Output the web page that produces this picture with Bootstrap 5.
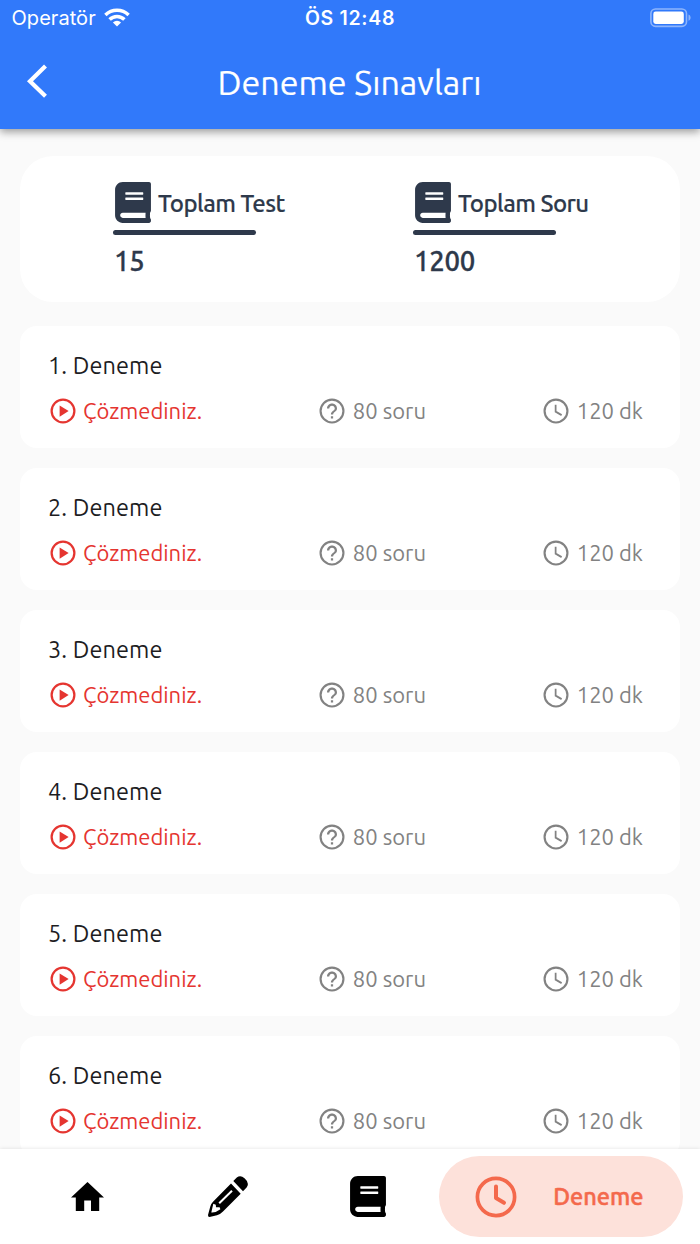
<!DOCTYPE html>
<html lang="tr">
<head>
<meta charset="utf-8">
<meta name="viewport" content="width=device-width, initial-scale=1">
<title>Deneme Sınavları</title>
<link rel="stylesheet" href="https://cdn.jsdelivr.net/npm/bootstrap@5.3.0/dist/css/bootstrap.min.css">
<style>
  body { font-family: "Ubuntu", "Noto Sans", sans-serif; background: #fafafa; color: #1d1d1f; }
  svg { display: block; flex: none; }
  .app-header { height: 128.5px; background: #3179fa; box-shadow: 0 3px 8px rgba(0,0,0,.38); z-index: 2; }
  .status-line { height: 36px; padding: 0 9px; font-family: "Inter", sans-serif; font-size: 20px; line-height: 36px; }
  .status-side { flex: 1 1 0; }
  .carrier { letter-spacing: .05px; margin-left: 2.5px; }
  .clock-text { font-weight: 600; font-size: 19.5px; letter-spacing: .7px; }
  .title-line { height: 92.5px; padding-left: 26px; }
  .title-line h1 { font-size: 34px; line-height: 91px; font-weight: 400; -webkit-text-stroke: .2px currentColor; }
  .title-end { width: 49px; }
  .app-main { padding: 27px 20px 0; min-height: 0; }
  .summary { height: 146.5px; border-radius: 33px; color: #2e394b; padding: 26px 0 0 92.5px; margin-bottom: 24px; }
  .summary-item { width: 300px; flex: none; }
  .summary-icon { margin: 0 0 0 2px; }
  .summary-label { font-size: 24px; line-height: 42px; font-weight: 500; letter-spacing: -.6px; margin: 1px 0 -1px 7.5px; -webkit-text-stroke: .15px currentColor; }
  .rule { width: 143.5px; height: 5.5px; border-radius: 3px; background: #2e394b; margin: 6px 0 0; }
  .summary-value { font-size: 27.5px; line-height: 36px; font-weight: 500; letter-spacing: -.3px; margin: 8px 0 0 1.5px; -webkit-text-stroke: .3px currentColor; }
  .exam { height: 122px; border-radius: 17px; padding: 24px 37px 0 28px; margin-bottom: 20px; flex: none; }
  .exam h2 { font-size: 23.5px; line-height: 30px; font-weight: 400; letter-spacing: .1px; margin: 0 0 15.5px; }
  .exam-info { font-size: 22px; line-height: 30px; color: #828282; margin-left: -.5px; }
  .exam-info span { margin-left: 5.5px; }
  .exam-info .unsolved { color: #e53530; }
  .bottom-bar { height: 95px; background: #fff; box-shadow: 0 0 4px rgba(0,0,0,.12); z-index: 2; padding: 7px 17px; }
  .tab { width: 140.5px; height: 81px; }
  .tab-active { width: 244px; height: 81px; color: #f4694c; background: #fde1da; font-size: 23.5px; font-weight: 500; padding: 0 39px 0 36px; }
  .tab-active span { -webkit-text-stroke: .5px currentColor; }
</style>
</head>
<body class="vh-100 overflow-hidden d-flex flex-column">

<svg class="d-none" xmlns="http://www.w3.org/2000/svg">
  <symbol id="book" viewBox="0 0 448 512"><path fill="currentColor" d="M448 360V24c0-13.3-10.7-24-24-24H96C43 0 0 43 0 96v320c0 53 43 96 96 96h328c13.3 0 24-10.7 24-24v-16c0-7.5-3.5-14.3-8.9-18.7-4.2-15.4-4.2-59.3 0-74.7 5.4-4.3 8.9-11.1 8.9-18.6zM128 134c0-3.3 2.7-6 6-6h212c3.3 0 6 2.7 6 6v20c0 3.3-2.7 6-6 6H134c-3.3 0-6-2.7-6-6v-20zm0 64c0-3.3 2.7-6 6-6h212c3.3 0 6 2.7 6 6v20c0 3.3-2.7 6-6 6H134c-3.3 0-6-2.7-6-6v-20zm253.4 250H96c-17.7 0-32-14.3-32-32 0-17.6 14.4-32 32-32h285.4c-1.9 17.1-1.9 46.9 0 64z"/></symbol>
  <symbol id="play" viewBox="0 0 24 24"><circle cx="12" cy="12" r="9.1" fill="none" stroke="currentColor" stroke-width="1.8"/><path fill="currentColor" d="M9.3 7.5v9l7.2-4.5z"/></symbol>
  <symbol id="help" viewBox="0 0 24 24"><circle cx="12" cy="12" r="9.15" fill="none" stroke="currentColor" stroke-width="1.7"/><path fill="currentColor" d="M11.1 18h1.8v-1.900h-1.800zM12 6c-2.210 0-4 1.790-4 4h1.800c0-1.300 1-2.200 2.200-2.200s2.200 1 2.200 2.100c0 2-3.100 1.850-3.100 4.900h1.800c0-2.150 3.100-2.400 3.100-4.900C16 7.700 14.210 6 12 6z"/></symbol>
  <symbol id="clock" viewBox="0 0 24 24"><circle cx="12" cy="12" r="9.15" fill="none" stroke="currentColor" stroke-width="1.7"/><path fill="none" stroke="currentColor" stroke-width="1.4" d="M11.7 7v5.500l4.800 2.800"/></symbol>
</svg>

<header class="app-header text-white position-relative flex-shrink-0">
  <div class="status-line d-flex align-items-center">
    <div class="status-side d-flex align-items-center">
      <span class="carrier">Operatör</span>
      <svg width="26" height="19" viewBox="0 0 26 19" fill="#fff" style="margin:-2px 0 0 8px">
        <path d="M13 18.400 8.900 14.400a6 6 0 0 1 8.200 0z"/>
        <path fill="none" stroke="#fff" stroke-width="3.500" d="M5.600 11.600a10.600 10.600 0 0 1 14.800 0M1.400 7a16.800 16.800 0 0 1 23.200 0"/>
      </svg>
    </div>
    <span class="clock-text">ÖS 12:48</span>
    <div class="status-side d-flex justify-content-end">
      <svg width="41" height="20" viewBox="0 0 41 20" style="margin-top:-1px">
        <rect x=".9" y="1" width="35.600" height="17.400" rx="4.600" fill="none" stroke="#fff" stroke-opacity=".45" stroke-width="1.600"/>
        <rect x="3.300" y="3.600" width="30.500" height="12.400" rx="2.400" fill="#fff"/>
        <path d="M38.500 6.600c2.800 1 2.800 5.200 0 6.200z" fill="#fff" fill-opacity=".45"/>
      </svg>
    </div>
  </div>
  <div class="title-line d-flex align-items-center">
    <svg width="22" height="34" viewBox="0 0 22 34" style="margin-top:-2px"><path d="M19.500 2 4 17.200 19.500 32.200" fill="none" stroke="#fff" stroke-width="4.200"/></svg>
    <h1 class="flex-grow-1 text-center m-0">Deneme Sınavları</h1>
    <div class="title-end"></div>
  </div>
</header>

<main class="app-main flex-grow-1 overflow-hidden d-flex flex-column">
  <section class="summary bg-white d-flex flex-shrink-0">
    <div class="summary-item">
      <div class="d-flex align-items-center"><svg class="summary-icon" width="36" height="41"><use href="#book"/></svg><span class="summary-label">Toplam Test</span></div>
      <div class="rule"></div>
      <div class="summary-value">15</div>
    </div>
    <div class="summary-item">
      <div class="d-flex align-items-center"><svg class="summary-icon" width="36" height="41"><use href="#book"/></svg><span class="summary-label">Toplam Soru</span></div>
      <div class="rule"></div>
      <div class="summary-value">1200</div>
    </div>
  </section>
  <div id="exams"></div>
</main>

<nav class="bottom-bar d-flex align-items-start position-relative flex-shrink-0 text-black">
  <a class="tab d-flex align-items-center justify-content-center text-reset" href="#" aria-label="Ana sayfa">
    <svg width="33" height="29" viewBox="0 0 33 29" style="margin-top:-1px"><path d="M13.200 29V18.600h6.800V29h8.200V15.400H33L16.500 0 0 15.400h4.800V29z"/></svg>
  </a>
  <a class="tab d-flex align-items-center justify-content-center text-reset" href="#" aria-label="Testler">
    <svg width="42" height="42" viewBox="0 0 42 42">
      <path d="M26.300 5 29.800 1.600Q33.500-1.200 37.500 2.300 43 7 39.600 11.500L36 15.300z"/>
      <path d="M24 7.500 33.700 17.800 16 35.500Q13.500 38.200 10 39.200L2.500 41Q.8 41 1 39L3.300 30.500Q4 27.800 6 25.800z"/>
      <path fill="#fff" d="M6.300 27.800 8.800 28.800 9 31.300 12.600 31.200 13.400 33.300Q9 36.800 4.300 36.400z"/>
      <path fill="none" stroke="#fff" stroke-width="2" d="M12.200 27.300 25 14.800"/>
    </svg>
  </a>
  <a class="tab d-flex align-items-center justify-content-center text-reset" href="#" aria-label="Konular">
    <svg width="36" height="41"><use href="#book"/></svg>
  </a>
  <a class="tab-active rounded-pill d-flex align-items-center justify-content-between text-decoration-none" href="#">
    <svg width="42" height="42" viewBox="0 0 42 42" fill="none" stroke="currentColor"><circle cx="21" cy="21" r="18.600" stroke-width="3.700"/><path stroke-width="4" stroke-linecap="round" stroke-linejoin="round" d="M21 10.500V22l8 4.800"/></svg>
    <span>Deneme</span>
  </a>
</nav>

<script>
  document.getElementById('exams').innerHTML = [1, 2, 3, 4, 5, 6].map(n => `
    <article class="exam bg-white">
      <h2>${n}. Deneme</h2>
      <div class="exam-info d-flex justify-content-between">
        <div class="unsolved d-flex align-items-center"><svg width="30" height="30"><use href="#play"/></svg><span>Çözmediniz.</span></div>
        <div class="d-flex align-items-center"><svg width="30" height="30"><use href="#help"/></svg><span>80 soru</span></div>
        <div class="d-flex align-items-center"><svg width="30" height="30"><use href="#clock"/></svg><span>120 dk</span></div>
      </div>
    </article>`).join('');
</script>
<script src="https://cdn.jsdelivr.net/npm/bootstrap@5.3.0/dist/js/bootstrap.bundle.min.js"></script>
</body>
</html>
